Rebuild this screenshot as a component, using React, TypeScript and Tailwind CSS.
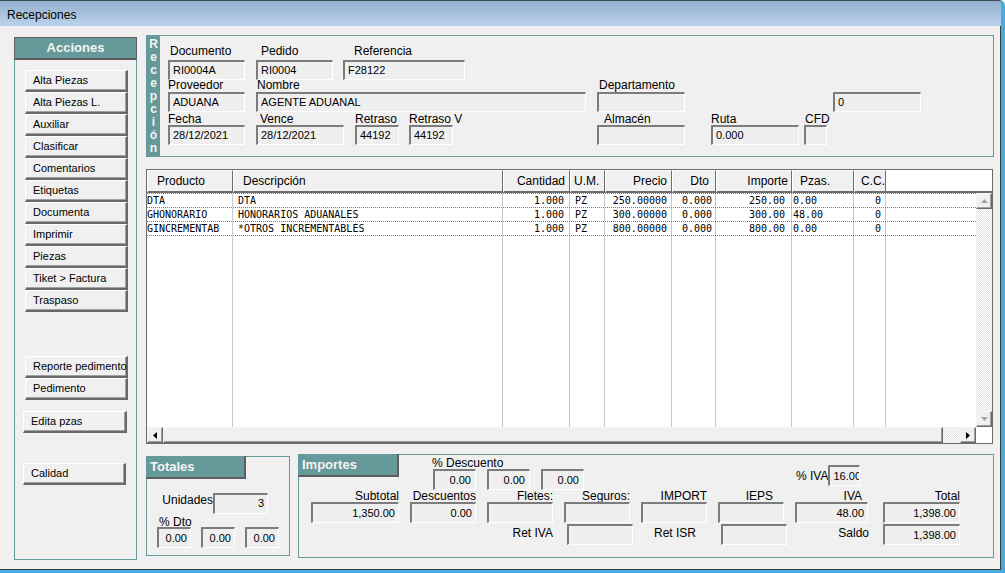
import React from 'react';

type BoxProps = { className?: string; children?: React.ReactNode; right?: boolean };

function Box({ className = '', children, right }: BoxProps) {
  return (
    <div
      className={`flex items-center overflow-hidden whitespace-nowrap border-t-2 border-l-2 border-r border-b border-t-[#7c7c7c] border-l-[#7c7c7c] border-r-white border-b-white bg-[#efefef] text-[11px] ${
        right ? 'justify-end pr-[3px]' : 'pl-[3px]'
      } ${className}`}
    >
      {children}
    </div>
  );
}

type FieldProps = {
  className?: string;
  label: string;
  labelClass?: string;
  boxClass?: string;
  value?: string;
  right?: boolean;
};

function Field({ className = '', label, labelClass = '', boxClass = '', value, right }: FieldProps) {
  return (
    <div className={`flex flex-col ${className}`}>
      <div className={`whitespace-nowrap text-[12px] ${labelClass}`}>{label}</div>
      <Box className={boxClass} right={right}>
        {value}
      </Box>
    </div>
  );
}

function Btn({ label, className = '' }: { label: string; className?: string }) {
  return (
    <div
      className={`flex h-[22px] items-center whitespace-nowrap border-t border-l border-r-2 border-b-2 border-t-white border-l-white border-r-[#696969] border-b-[#696969] bg-[#f0f0f0] pl-[7px] text-[11px] shadow-[inset_-1px_-1px_0_#a0a0a0] ${className}`}
    >
      {label}
    </div>
  );
}

function TealHead({ label, className = '' }: { label: string; className?: string }) {
  return (
    <div
      className={`flex h-[23px] items-center border-r-2 border-b-2 border-[#5e5e5e] bg-[#669999] pl-[4px] text-[13px] font-bold text-[#f4f4f4] ${className}`}
    >
      {label}
    </div>
  );
}

function ScrollBtn({ dir, className = '' }: { dir: 'up' | 'down' | 'left' | 'right'; className?: string }) {
  const pts = {
    up: '0,4 7,4 3.5,0',
    down: '0,0 7,0 3.5,4',
    left: '4,0 4,7 0,3.5',
    right: '0,0 0,7 4,3.5',
  }[dir];
  const vertical = dir === 'up' || dir === 'down';
  return (
    <div
      className={`flex h-[16px] w-[16px] shrink-0 items-center justify-center border-t border-l border-r border-b border-t-[#f4f4f4] border-l-[#f4f4f4] border-r-[#696969] border-b-[#696969] bg-[#f0f0f0] shadow-[inset_-1px_-1px_0_#a0a0a0] ${className}`}
    >
      <svg width={vertical ? 7 : 4} height={vertical ? 4 : 7} viewBox={vertical ? '0 0 7 4' : '0 0 4 7'}>
        <polygon points={pts} fill={vertical ? '#a3a3a3' : '#000000'} />
      </svg>
    </div>
  );
}

const actions = [
  'Alta Piezas',
  'Alta Piezas L.',
  'Auxiliar',
  'Clasificar',
  'Comentarios',
  'Etiquetas',
  'Documenta',
  'Imprimir',
  'Piezas',
  'Tiket > Factura',
  'Traspaso',
];

const cols = [
  { name: 'Producto', w: 'w-[86px]', hd: 'justify-start pl-[9px]', bd: 'justify-start pl-0' },
  { name: 'Descripción', w: 'w-[270px]', hd: 'justify-start pl-[9px]', bd: 'justify-start pl-[5px]' },
  { name: 'Cantidad', w: 'w-[67px]', hd: 'justify-end pr-[4px]', bd: 'justify-end pr-[5px]' },
  { name: 'U.M.', w: 'w-[35px]', hd: 'justify-start pl-[3px]', bd: 'justify-start pl-[5px]' },
  { name: 'Precio', w: 'w-[67px]', hd: 'justify-end pr-[4px]', bd: 'justify-end pr-[4px]' },
  { name: 'Dto', w: 'w-[44px]', hd: 'justify-end pr-[6px]', bd: 'justify-end pr-[3px]' },
  { name: 'Importe', w: 'w-[76px]', hd: 'justify-end pr-[3px]', bd: 'justify-end pr-[6px]' },
  { name: 'Pzas.', w: 'w-[62px]', hd: 'justify-start pl-[7px]', bd: 'justify-start pl-[1px]' },
  { name: 'C.C.', w: 'w-[32px]', hd: 'justify-end pr-0', bd: 'justify-end pr-[4px]' },
];

const rows = [
  ['DTA', 'DTA', '1.000', 'PZ', '250.00000', '0.000', '250.00', '0.00', '0'],
  ['GHONORARIO', 'HONORARIOS ADUANALES', '1.000', 'PZ', '300.00000', '0.000', '300.00', '48.00', '0'],
  ['GINCREMENTAB', '*OTROS INCREMENTABLES', '1.000', 'PZ', '800.00000', '0.000', '800.00', '0.00', '0'],
];

const checker =
  'bg-[image:repeating-conic-gradient(#ffffff_0%_25%,#e4e4e4_0%_50%)] bg-[length:2px_2px]';

function Sidebar() {
  return (
    <div className="mt-[11px] flex h-[523px] w-[123px] flex-col border-x border-b border-[#669999]">
      <div className="-mx-px flex h-[23px] items-center justify-center border border-[#5e5e5e] border-b-2 bg-[#669999] text-[13px] font-bold text-[#f4f4f4]">
        Acciones
      </div>
      <div className="ml-[10px] mt-[10px] flex w-[103px] flex-col">
        {actions.map((a) => (
          <Btn key={a} label={a} />
        ))}
      </div>
      <div className="ml-[10px] mt-[44px] flex w-[103px] flex-col">
        <Btn label="Reporte pedimento" />
        <Btn label="Pedimento" />
      </div>
      <Btn label="Edita pzas" className="ml-[8px] mt-[11px] w-[104px]" />
      <Btn label="Calidad" className="ml-[8px] mt-[30px] w-[103px]" />
    </div>
  );
}

function HeaderPanel() {
  const r1 = 'h-[17px] leading-[17px]';
  const r2 = 'h-[12px] leading-[10px]';
  const r3 = 'h-[13px] leading-[14px]';
  return (
    <div className="flex h-[122px] border border-[#669999]">
      <div className="flex w-[13px] flex-col items-center bg-[#669999] pt-[2px] text-[12px] font-bold leading-[13px] text-[#f4f4f4]">
        {'Recepción'.split('').map((c, i) => (
          <span key={i}>{c}</span>
        ))}
      </div>
      <div className="flex flex-col pt-[7px]">
        <div className="flex">
          <Field className="ml-[8px] w-[77px]" label="Documento" labelClass={`${r1} pl-[2px]`} boxClass="h-[20px]" value="RI0004A" />
          <Field className="ml-[11px] w-[77px]" label="Pedido" labelClass={`${r1} pl-[5px]`} boxClass="h-[20px]" value="RI0004" />
          <Field className="ml-[10px] w-[122px]" label="Referencia" labelClass={`${r1} pl-[11px]`} boxClass="h-[20px]" value="F28122" />
        </div>
        <div className="flex">
          <Field className="ml-[8px] w-[77px]" label="Proveedor" labelClass={r2} boxClass="h-[20px]" value="ADUANA" />
          <Field className="ml-[11px] w-[330px]" label="Nombre" labelClass={`${r2} pl-[1px]`} boxClass="h-[20px]" value="AGENTE ADUANAL" />
          <Field className="ml-[11px] w-[88px]" label="Departamento" labelClass={`${r2} pl-[2px]`} boxClass="h-[20px]" value="" />
          <Field className="ml-[148px] w-[88px]" label={'\u00a0'} labelClass={r2} boxClass="h-[20px]" value="0" />
        </div>
        <div className="flex">
          <Field className="ml-[8px] w-[77px]" label="Fecha" labelClass={r3} boxClass="h-[20px]" value="28/12/2021" />
          <Field className="ml-[11px] w-[88px]" label="Vence" labelClass={`${r3} pl-[4px]`} boxClass="h-[20px]" value="28/12/2021" />
          <Field className="ml-[11px] w-[44px]" label="Retraso" labelClass={r3} boxClass="h-[20px]" value="44192" />
          <Field className="ml-[10px] w-[44px]" label="Retraso V" labelClass={r3} boxClass="h-[20px]" value="44192" />
          <Field className="ml-[144px] w-[88px]" label="Almacén" labelClass={`${r3} pl-[7px]`} boxClass="h-[20px]" value="" />
          <Field className="ml-[26px] w-[88px]" label="Ruta" labelClass={r3} boxClass="h-[20px]" value="0.000" />
          <Field className="ml-[5px] w-[23px]" label="CFD" labelClass={`${r3} pl-[1px]`} boxClass="h-[20px]" value="" />
        </div>
      </div>
    </div>
  );
}

function Grid() {
  return (
    <div className="mt-[12px] flex h-[275px] w-[847px] flex-col border border-[#6b6b6b] bg-white">
      <div className="flex h-[23px]">
        {cols.map((c) => (
          <div
            key={c.name}
            className={`${c.w} flex h-full shrink-0 items-center border-t border-l border-r border-b-2 border-t-white border-l-white border-r-[#6d6d6d] border-b-[#6d6d6d] bg-[#f0f0f0] text-[12px] ${c.hd}`}
          >
            {c.name}
          </div>
        ))}
        <div className="flex-1 border-b-2 border-[#6d6d6d] bg-white" />
      </div>
      <div className="flex h-[234px]">
        <div className="flex flex-1 flex-col border-t border-dotted border-[#7a7a7a] font-['DejaVu_Sans_Mono',monospace] text-[10px]">
          {rows.map((r, i) => (
            <div key={i} className="flex h-[14px] border-b border-dotted border-[#7a7a7a]">
              {cols.map((c, j) => (
                <div key={j} className={`${c.w} flex shrink-0 items-center border-r border-[#c8c8c8] ${c.bd}`}>
                  {r[j]}
                </div>
              ))}
            </div>
          ))}
          <div className="flex flex-1">
            {cols.map((c) => (
              <div key={c.name} className={`${c.w} shrink-0 border-r border-[#c8c8c8]`} />
            ))}
          </div>
        </div>
        <div className={`flex w-[16px] flex-col ${checker}`}>
          <ScrollBtn dir="up" />
          <div className="flex-1" />
          <ScrollBtn dir="down" />
        </div>
      </div>
      <div className="flex h-[16px]">
        <ScrollBtn dir="left" />
        <div className="h-[16px] w-[780px] border-t border-l border-r border-b border-t-[#f4f4f4] border-l-[#f4f4f4] border-r-[#696969] border-b-[#696969] bg-[#f0f0f0] shadow-[inset_-1px_-1px_0_#a0a0a0]" />
        <div className={`h-[16px] w-[17px] ${checker}`} />
        <ScrollBtn dir="right" />
        <div className="h-[16px] w-[16px] bg-white" />
      </div>
    </div>
  );
}

function Totales() {
  return (
    <div className="mt-[2px] flex h-[100px] w-[144px] flex-col border border-[#669999]">
      <TealHead label="Totales" className="-ml-px -mt-px w-[100px]" />
      <div className="mt-[12px] flex items-center">
        <div className="mb-[6px] ml-[14px] w-[52px] text-right text-[12px]">Unidades</div>
        <Box right className="h-[21px] w-[55px]">
          3
        </Box>
      </div>
      <div className="ml-[12px] mt-px h-[11px] text-[12px] leading-[12px]">% Dto</div>
      <div className="ml-[10px] flex gap-[10px]">
        <Box right className="h-[21px] w-[34px]">0.00</Box>
        <Box right className="h-[21px] w-[34px]">0.00</Box>
        <Box right className="h-[21px] w-[34px]">0.00</Box>
      </div>
    </div>
  );
}

function Importes() {
  const lb = 'h-[12px] leading-[12px] text-right';
  return (
    <div className="ml-[8px] flex h-[104px] w-[696px] flex-col border border-[#669999]">
      <div className="flex h-[35px]">
        <TealHead label="Importes" className="-ml-px -mt-px w-[101px]" />
        <div className="ml-[34px] flex flex-col">
          <div className="-ml-px h-[14px] whitespace-nowrap pt-[2px] text-[12px] leading-[12px]">% Descuento</div>
          <div className="flex gap-[11px]">
            <Box right className="h-[21px] w-[43px] pr-[4px]">0.00</Box>
            <Box right className="h-[21px] w-[43px] pr-[4px]">0.00</Box>
            <Box right className="h-[21px] w-[43px] pr-[4px]">0.00</Box>
          </div>
        </div>
        <div className="ml-[212px] mt-[10px] flex h-[21px] items-center">
          <span className="text-[12px]">% IVA</span>
          <Box className="h-[21px] w-[32px]">16.00</Box>
        </div>
      </div>
      <div className="flex">
        <Field className="ml-[12px] w-[88px]" label="Subtotal" labelClass={lb} boxClass="h-[21px]" value="1,350.00" right />
        <Field className="ml-[11px] w-[66px]" label="Descuentos" labelClass={lb} boxClass="h-[21px]" value="0.00" right />
        <Field className="ml-[11px] w-[66px]" label="Fletes:" labelClass={lb} boxClass="h-[21px]" right />
        <Field className="ml-[11px] w-[66px]" label="Seguros:" labelClass={lb} boxClass="h-[21px]" right />
        <Field className="ml-[11px] w-[66px]" label="IMPORT" labelClass={lb} boxClass="h-[21px]" right />
        <Field className="ml-[11px] w-[66px]" label="IEPS" labelClass={`${lb} pr-[11px]`} boxClass="h-[21px]" right />
        <Field className="ml-[11px] w-[73px]" label="IVA" labelClass={`${lb} pr-[6px]`} boxClass="h-[21px]" value="48.00" right />
        <Field className="ml-[15px] w-[77px]" label="Total" labelClass={lb} boxClass="h-[21px]" value="1,398.00" right />
      </div>
      <div className="mt-[1px] flex h-[21px] items-center text-[12px]">
        <div className="mb-[3px] w-[254px] text-right">Ret IVA</div>
        <Box className="ml-[14px] h-[21px] w-[66px]" />
        <div className="mb-[3px] w-[65px] pr-[2px] text-right">Ret ISR</div>
        <Box className="ml-[23px] h-[21px] w-[66px]" />
        <div className="mb-[3px] w-[83px] pr-[1px] text-right">Saldo</div>
        <Box right className="ml-[13px] h-[21px] w-[77px]">1,398.00</Box>
      </div>
    </div>
  );
}

export default function App() {
  return (
    <div className="flex h-[573px] w-[1005px] flex-col overflow-hidden bg-[#f0f0f0] font-['Liberation_Sans',Arial,sans-serif] text-black">
      <div className="flex h-[26px] shrink-0 items-center rounded-tr-[6px] border-t border-r-[4px] border-t-[#3f4a55] border-r-[#44ace3] bg-linear-to-b from-[#94afcd] to-[#bcd3ec] px-[7px] pt-[2px] text-[12px]">
        Recepciones
      </div>
      <div className="flex flex-1 items-start border-r-[4px] border-b-[3px] border-r-[#44ace3] border-b-[#44ace3] pl-[14px] shadow-[inset_-1px_-1px_0_#3a3a3a]">
        <Sidebar />
        <div className="ml-[9px] mt-[9px] flex w-[848px] flex-col">
          <HeaderPanel />
          <Grid />
          <div className="mt-[10px] flex items-start">
            <Totales />
            <Importes />
          </div>
        </div>
      </div>
    </div>
  );
}
